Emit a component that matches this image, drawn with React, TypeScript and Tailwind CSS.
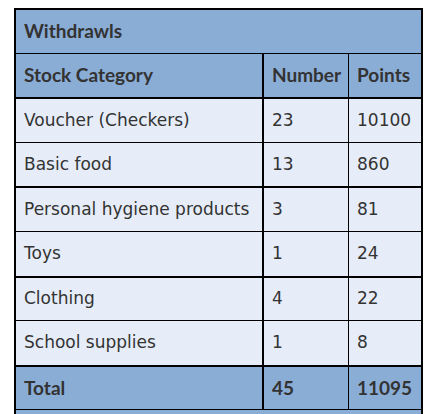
const rows = [
  { name: "Voucher (Checkers)", number: "23", points: "10100", h: "h-[44px]", b: "border-b" },
  { name: "Basic food", number: "13", points: "860", h: "h-[45px]", b: "border-b-2" },
  { name: "Personal hygiene products", number: "3", points: "81", h: "h-[44px]", b: "border-b" },
  { name: "Toys", number: "1", points: "24", h: "h-[46px]", b: "border-b-2" },
  { name: "Clothing", number: "4", points: "22", h: "h-[43px]", b: "border-b" },
  { name: "School supplies", number: "1", points: "8", h: "h-[46px]", b: "border-b-2" },
];

function App() {
  return (
    <div className="min-h-screen bg-white pt-[8px] pl-[14px] font-['DejaVu_Sans',sans-serif] text-[#333]">
      <div className="w-[409px] border-2 border-black">
        {/* Title */}
        <div className="h-[44px] bg-[#8aadd6] border-b border-black flex items-center px-2 font-['Lato',sans-serif] font-bold text-[19px] text-[#333]">
          Withdrawls
        </div>

        {/* Column headings */}
        <div className="flex h-[45px] bg-[#8aadd6] border-b-2 border-black font-['Lato',sans-serif] font-bold text-[19px]">
          <div className="w-[248px] border-r-2 border-black flex items-center px-2">Stock Category</div>
          <div className="w-[85px] border-r border-black flex items-center px-2">Number</div>
          <div className="w-[72px] flex items-center px-2">Points</div>
        </div>

        {/* Data rows */}
        {rows.map((r) => (
          <div key={r.name} className={`flex bg-[#e6edf8] border-black text-[17px] ${r.h} ${r.b}`}>
            <div className="w-[248px] border-r-2 border-black flex items-center px-2">{r.name}</div>
            <div className="w-[85px] border-r border-black flex items-center px-2">{r.number}</div>
            <div className="w-[72px] flex items-center px-2">{r.points}</div>
          </div>
        ))}

        {/* Total */}
        <div className="flex h-[43px] bg-[#8aadd6] border-b border-black font-['Lato',sans-serif] font-bold text-[19px]">
          <div className="w-[248px] border-r-2 border-black flex items-center px-2">Total</div>
          <div className="w-[85px] border-r border-black flex items-center px-2">45</div>
          <div className="w-[72px] flex items-center px-2">11095</div>
        </div>

        <div className="h-[40px] bg-[#8aadd6]"></div>
      </div>
    </div>
  );
}

export default App;
